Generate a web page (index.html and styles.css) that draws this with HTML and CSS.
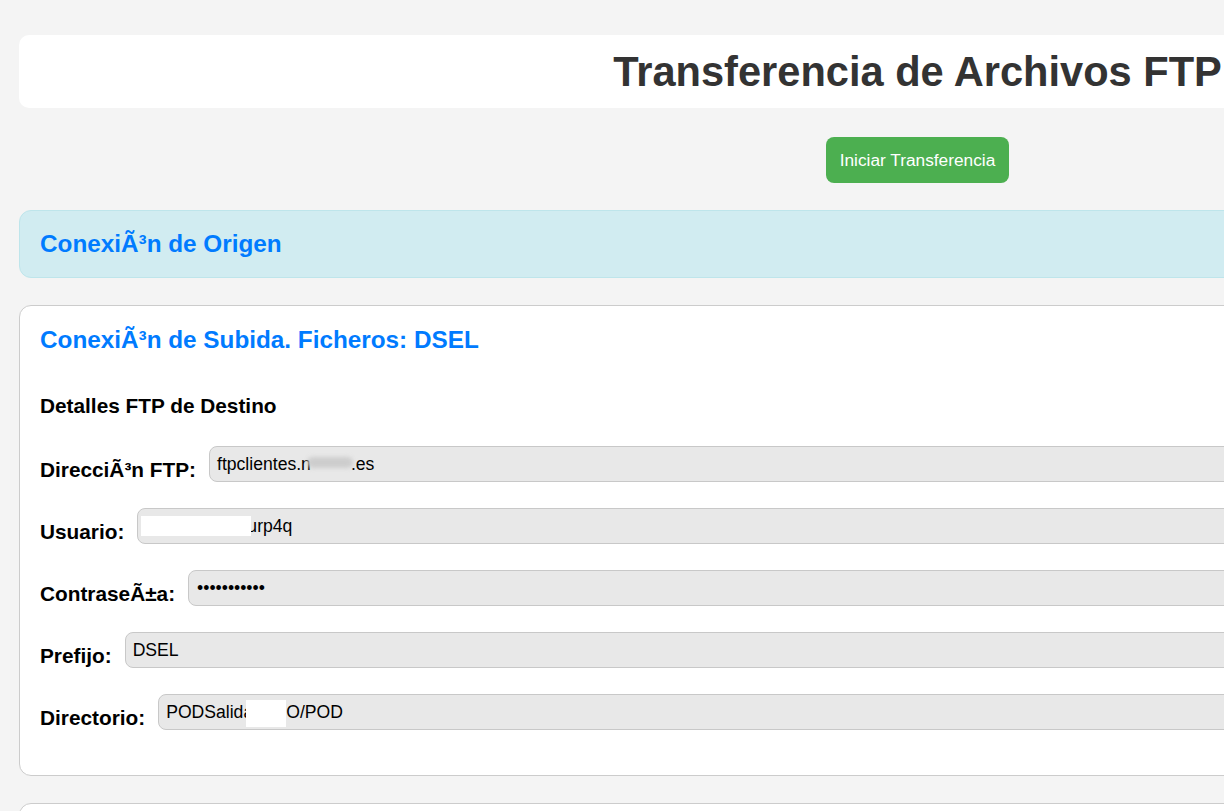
FILE: index.html
```html
<!DOCTYPE html>
<html lang="es">
<head>
<meta charset="utf-8">
<title>Transferencia de Archivos FTP</title>
<link rel="stylesheet" href="styles.css">
</head>
<body>
<div class="page">
  <header class="title-box">
    <h1 class="title">Transferencia de Archivos FTP</h1>
  </header>

  <div class="actions">
    <button class="btn-start" type="button">Iniciar Transferencia</button>
  </div>

  <section class="origin">
    <h2 class="section-title">ConexiÃ³n de Origen</h2>
  </section>

  <section class="card">
    <h2 class="section-title">ConexiÃ³n de Subida. Ficheros: DSEL</h2>
    <h3 class="sub-title">Detalles FTP de Destino</h3>

    <div class="rows">
      <div class="row">
        <label class="label">DirecciÃ³n FTP:</label>
        <div class="field">ftpclientes.n<span class="smudge"></span>.es</div>
      </div>
      <div class="row">
        <label class="label">Usuario:</label>
        <div class="field field-user"><span class="redact redact-user"></span><span class="after-user">urp4q</span></div>
      </div>
      <div class="row">
        <label class="label">ContraseÃ±a:</label>
        <div class="field field-pass">•••••••••••</div>
      </div>
      <div class="row">
        <label class="label">Prefijo:</label>
        <div class="field">DSEL</div>
      </div>
      <div class="row">
        <label class="label">Directorio:</label>
        <div class="field">PODSalida<span class="redact redact-dir"></span>O/POD</div>
      </div>
    </div>
  </section>

  <section class="card card-next"></section>
</div>
</body>
</html>
```
FILE: styles.css
```css
html {
  overflow: hidden;
}

body {
  margin: 0;
  background: #f4f4f4;
  font-family: "Liberation Sans", Arial, sans-serif;
  color: #000;
}

.page {
  width: 1797px;
  padding: 35px 0 0 19px;
  display: flex;
  flex-direction: column;
}

.title-box {
  background: #fff;
  border-radius: 10px;
  padding: 13px 0;
  text-align: center;
}

.title {
  margin: 0;
  font-size: 41.6px;
  line-height: 47px;
  font-weight: bold;
  color: #333;
}

.actions {
  display: flex;
  justify-content: center;
  margin: 29px 0 27px;
}

.btn-start {
  background: #4caf50;
  color: #fff;
  border: none;
  border-radius: 8px;
  font-family: "Liberation Sans", Arial, sans-serif;
  font-size: 17.3px;
  line-height: 20px;
  padding: 13px 13.5px;
  cursor: pointer;
}

.origin {
  background: #d1ecf1;
  border: 1px solid #bee5eb;
  border-radius: 12px;
  padding: 19px 20px 19px;
  margin-bottom: 27px;
}

.section-title {
  margin: 0;
  font-size: 24.3px;
  line-height: 28px;
  font-weight: bold;
  color: #007bff;
}

.card {
  background: #fff;
  border: 1px solid #ccc;
  border-radius: 12px;
  padding: 20px 20px 45px;
  margin-bottom: 27px;
}

.sub-title {
  margin: 40px 0 0;
  font-size: 20.8px;
  line-height: 24px;
  font-weight: bold;
}

.rows {
  display: flex;
  flex-direction: column;
  gap: 26px;
  margin-top: 28px;
}

.row {
  display: flex;
  align-items: flex-end;
  gap: 13px;
}

.label {
  font-size: 20.8px;
  font-weight: bold;
  white-space: nowrap;
}

.field {
  flex: 1;
  background: #e8e8e8;
  border: 1px solid #c8c8c8;
  border-radius: 8px;
  padding: 7px 7px;
  font-size: 17.6px;
  line-height: 20px;
  white-space: nowrap;
}

.smudge {
  display: inline-block;
  width: 46px;
  height: 11px;
  margin: 0 -2px 0 -4px;
  background: #cdcdcd;
  border-radius: 6px;
  filter: blur(2px);
  vertical-align: 2px;
}

.field-user {
  padding-left: 3px;
}

.redact {
  position: relative;
  z-index: 1;
  display: inline-block;
  background: #fff;
}

.redact-user {
  width: 110px;
  height: 20px;
  margin-top: -3px;
  vertical-align: middle;
}

.after-user {
  margin-left: -4px;
}

.redact-dir {
  width: 40px;
  height: 27px;
  margin: -3px 0 -8px -7px;
  vertical-align: -1px;
}

.field-pass {
  padding-left: 8px;
}

.card-next {
  min-height: 300px;
  padding: 20px;
}
```
